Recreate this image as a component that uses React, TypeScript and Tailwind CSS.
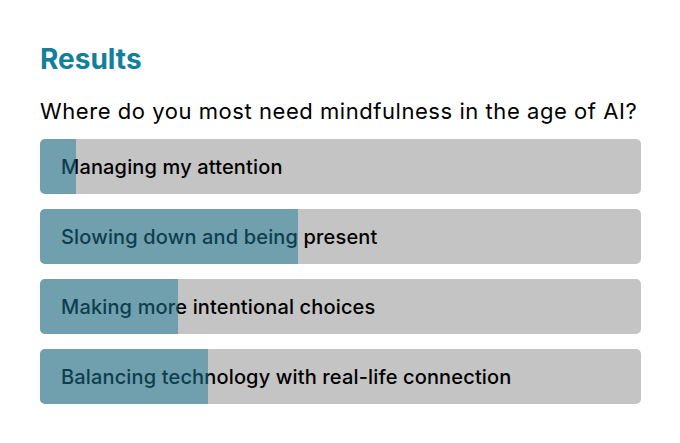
const options = [
  { label: 'Managing my attention', pct: 6 },
  { label: 'Slowing down and being present', pct: 43 },
  { label: 'Making more intentional choices', pct: 23 },
  { label: 'Balancing technology with real-life connection', pct: 28 },
];

export default function App() {
  return (
    <div
      className="min-h-screen bg-white px-10 pt-[42px] text-black"
      style={{ fontFamily: 'Inter, "Noto Sans", sans-serif' }}
    >
      <h2 className="text-[28px] font-bold leading-[34px] text-[#13809b]">Results</h2>
      <p className="mt-[20px] whitespace-nowrap text-[22px] leading-[30px] tracking-[0.55px]">
        Where do you most need mindfulness in the age of AI?
      </p>
      <div className="mt-[13px] flex w-[601px] flex-col gap-[15px]">
        {options.map((o) => (
          <div
            key={o.label}
            className="relative flex h-[55px] items-center overflow-hidden rounded-[5px] bg-[#c4c4c4] px-[21px]"
          >
            <span className="whitespace-nowrap text-[20px] font-medium tracking-[0.15px]">{o.label}</span>
            <div
              className="absolute inset-y-0 left-0 bg-[#1c7a98]/50"
              style={{ width: `${o.pct}%` }}
            />
          </div>
        ))}
      </div>
    </div>
  );
}
